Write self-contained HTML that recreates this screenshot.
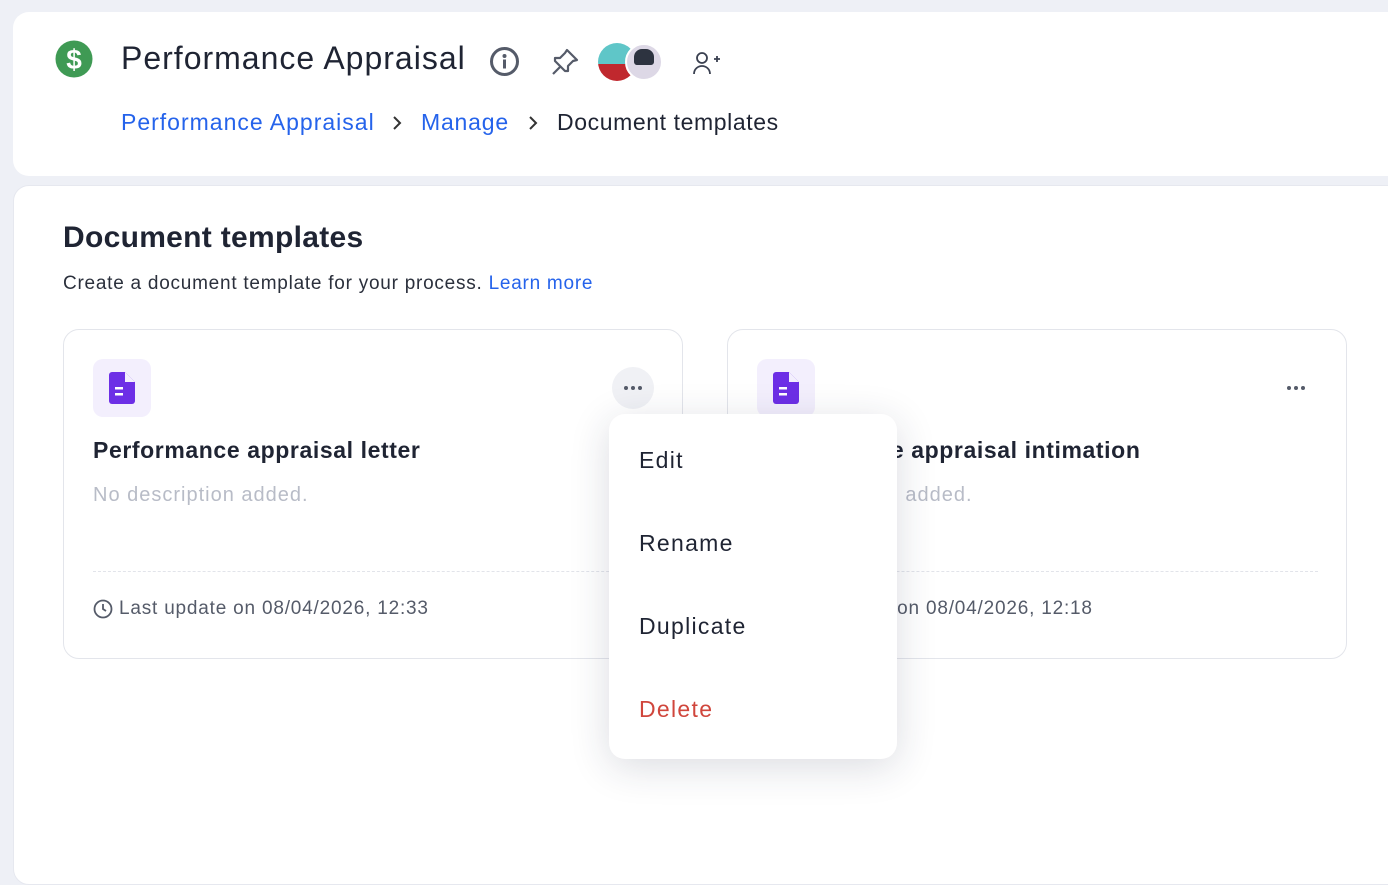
<!DOCTYPE html>
<html><head><meta charset="utf-8"><style>
*{box-sizing:border-box;margin:0;padding:0}
body{width:1388px;height:862px;overflow:hidden;background:#eef0f6;font-family:"Liberation Sans",sans-serif;color:#1f2433;position:relative}
.top{position:absolute;left:13px;top:12px;width:1400px;height:164px;background:#fff;border-radius:16px}
.main{position:absolute;left:13px;top:185px;width:1400px;height:700px;background:#fff;border-radius:16px;border:1px solid #e6e8ef}
.abs{position:absolute}
.card{position:absolute;top:329px;width:620px;height:330px;border:1px solid #e3e5eb;border-radius:16px;background:#fff}
.ic{position:absolute;left:29px;top:29px;width:58px;height:58px;border-radius:10px;background:#f3effd}
.ct{position:absolute;left:29px;top:107px;font-size:23px;font-weight:bold;letter-spacing:0.6px;color:#1f2433;white-space:nowrap}
.cd{position:absolute;left:29px;top:154px;font-size:20px;letter-spacing:1px;color:#b8bcc7;white-space:nowrap}
.hr{position:absolute;left:29px;right:28px;top:241px;border-top:1px dashed #e2e4ea}
.cu{position:absolute;left:29px;top:268px;font-size:19px;letter-spacing:0.8px;color:#555b69;display:flex;align-items:center;gap:6px;white-space:nowrap}
.dots{position:absolute;width:42px;height:42px;border-radius:50%;display:flex;align-items:center;justify-content:center;gap:3px}
.dots i{width:4px;height:4px;border-radius:50%;background:#555b69}
.menu{position:absolute;left:609px;top:414px;width:288px;height:345px;background:#fff;border-radius:16px;box-shadow:0 8px 40px rgba(30,40,70,.16)}
.menu div{position:absolute;left:30px;font-size:23px;letter-spacing:1.3px;color:#1f2433}
</style></head><body>
<div class="top"></div>
<svg class="abs" style="left:55px;top:40px" width="38" height="38" viewBox="0 0 38 38"><circle cx="19" cy="19" r="18.5" fill="#3f9a54"/><text x="19" y="29" text-anchor="middle" font-family="Liberation Sans" font-weight="bold" font-size="28" fill="#fff">$</text></svg>
<div class="abs" style="left:121px;top:40px;font-size:32px;letter-spacing:1px;color:#1f2433;white-space:nowrap">Performance Appraisal</div>
<svg class="abs" style="left:489px;top:46px" width="31" height="31" viewBox="0 0 31 31"><circle cx="15.5" cy="15.5" r="13" fill="none" stroke="#555b69" stroke-width="3"/><circle cx="15.5" cy="10" r="2" fill="#555b69"/><rect x="14" y="13.5" width="3" height="9" fill="#555b69"/></svg>
<svg class="abs" style="left:549px;top:46px" width="32" height="32" viewBox="0 0 32 32" fill="none" stroke="#555b69" stroke-width="2.2" stroke-linejoin="round"><path d="M18 4l10 10-4 1-5 5 0 5-3 0-10-10 0-3 5 0 5-5z"/><path d="M11 21l-7 7"/></svg>
<div class="abs" style="left:598px;top:43px;width:38px;height:38px;border-radius:50%;background:linear-gradient(#5fc6c8 55%,#c0282e 55%)"></div>
<div class="abs" style="left:625px;top:43px;width:38px;height:38px;border-radius:50%;background:#ddd8e6;border:2px solid #fff"><div style="margin:4px auto;width:20px;height:16px;background:#2d3340;border-radius:8px 8px 3px 3px"></div></div>
<svg class="abs" style="left:692px;top:50px" width="28" height="26" viewBox="0 0 28 26" fill="none" stroke="#3a4050" stroke-width="1.8"><circle cx="10" cy="8" r="5"/><path d="M2 24c0-5 4-8 8-8s8 3 8 8"/><path d="M22 9h6M25 6v6"/></svg>
<div class="abs" style="left:121px;top:109px;font-size:23px;letter-spacing:1px;color:#2563eb;white-space:nowrap">Performance Appraisal</div>
<svg class="abs" style="left:390px;top:114px" width="14" height="18" viewBox="0 0 14 18" fill="none" stroke="#333" stroke-width="2"><path d="M4 3l6 6-6 6"/></svg>
<div class="abs" style="left:421px;top:109px;font-size:23px;letter-spacing:0.8px;color:#2563eb">Manage</div>
<svg class="abs" style="left:526px;top:114px" width="14" height="18" viewBox="0 0 14 18" fill="none" stroke="#333" stroke-width="2"><path d="M4 3l6 6-6 6"/></svg>
<div class="abs" style="left:557px;top:109px;font-size:23px;letter-spacing:0.6px;color:#1f2433;white-space:nowrap">Document templates</div>
<div class="main"></div>
<div class="abs" style="left:63px;top:221px;font-size:30px;font-weight:bold;letter-spacing:0.3px;color:#1f2433;white-space:nowrap">Document templates</div>
<div class="abs" style="left:63px;top:273px;font-size:19px;letter-spacing:0.75px;color:#2b303c;white-space:nowrap">Create a document template for your process. <span style="color:#2563eb">Learn more</span></div>
<div class="card" style="left:63px">
<div class="ic"><svg style="margin:12px 0 0 15px" width="28" height="34" viewBox="0 0 28 34"><path d="M4 1h13l10 10v19a3 3 0 0 1-3 3H4a3 3 0 0 1-3-3V4a3 3 0 0 1 3-3z" fill="#6d2fe6"/><path d="M17 1v10h10z" fill="#f3effd"/><rect x="7" y="16" width="8" height="2.5" fill="#fff"/><rect x="7" y="22" width="8" height="2.5" fill="#fff"/></svg></div>
<div class="dots" style="left:548px;top:37px;background:#f0f1f5"><i></i><i></i><i></i></div>
<div class="ct">Performance appraisal letter</div>
<div class="cd">No description added.</div>
<div class="hr"></div>
<div class="cu"><svg width="20" height="20" viewBox="0 0 20 20" fill="none" stroke="#555b69" stroke-width="1.8"><circle cx="10" cy="10" r="8.5"/><path d="M10 5v5l3 2"/></svg>Last update on 08/04/2026, 12:33</div>
</div>
<div class="card" style="left:727px">
<div class="ic"><svg style="margin:12px 0 0 15px" width="28" height="34" viewBox="0 0 28 34"><path d="M4 1h13l10 10v19a3 3 0 0 1-3 3H4a3 3 0 0 1-3-3V4a3 3 0 0 1 3-3z" fill="#6d2fe6"/><path d="M17 1v10h10z" fill="#f3effd"/><rect x="7" y="16" width="8" height="2.5" fill="#fff"/><rect x="7" y="22" width="8" height="2.5" fill="#fff"/></svg></div>
<div class="dots" style="left:547px;top:37px"><i></i><i></i><i></i></div>
<div class="ct">Performance appraisal intimation</div>
<div class="cd">No description added.</div>
<div class="hr"></div>
<div class="cu"><svg width="20" height="20" viewBox="0 0 20 20" fill="none" stroke="#555b69" stroke-width="1.8"><circle cx="10" cy="10" r="8.5"/><path d="M10 5v5l3 2"/></svg>Last update on 08/04/2026, 12:18</div>
</div>
<div class="menu">
<div style="top:33px">Edit</div>
<div style="top:116px">Rename</div>
<div style="top:199px">Duplicate</div>
<div style="top:282px;color:#d0463c">Delete</div>
</div>
</body></html>
